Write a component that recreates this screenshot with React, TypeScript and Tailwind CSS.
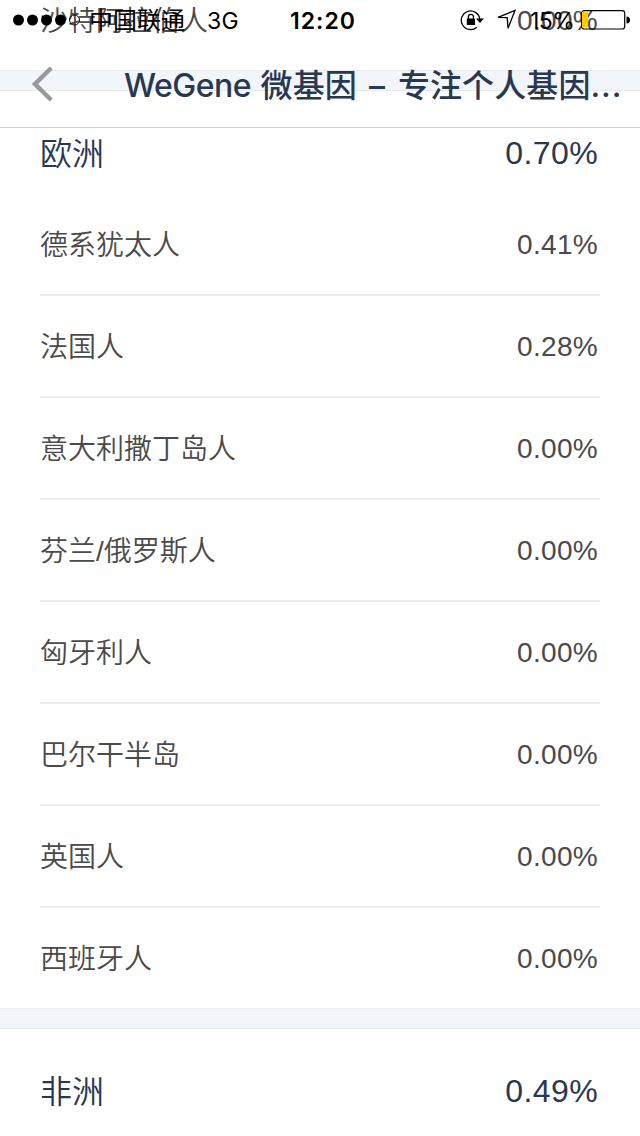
const europe = [
  { name: "德系犹太人", value: "0.41%" },
  { name: "法国人", value: "0.28%" },
  { name: "意大利撒丁岛人", value: "0.00%" },
  { name: "芬兰/俄罗斯人", value: "0.00%" },
  { name: "匈牙利人", value: "0.00%" },
  { name: "巴尔干半岛", value: "0.00%" },
  { name: "英国人", value: "0.00%" },
  { name: "西班牙人", value: "0.00%" },
];

function Row({ name, value }: { name: string; value: string }) {
  return (
    <li className="flex h-[102px] items-center justify-between border-b-2 border-[#eaeef2] pr-0.5 text-[28px] text-[#4a4a4a] last:h-[100px] last:border-b-0">
      <span className="pt-1 font-[350]">{name}</span>
      <span className="pt-0.5 tracking-[0.3px]">{value}</span>
    </li>
  );
}

function Heading({ name, value }: { name: string; value: string }) {
  return (
    <h2 className="flex h-[103px] items-center justify-between pt-5 pr-[42px] pl-10 text-[32px] text-[#283850]">
      <span className="pt-0.5 font-[350]">{name}</span>
      <span className="tracking-[0.4px]">{value}</span>
    </h2>
  );
}

function Divider() {
  return <div className="h-[21px] border-y border-[#e6ebee] bg-[#f2f6fa]" />;
}

function StatusBar() {
  return (
    <div className="flex h-10 items-center text-[23px] leading-10 text-black">
      <div className="flex w-[290px] items-center pl-[13px]">
        <svg width="68" height="12" viewBox="0 0 68 12">
          <circle cx="5.5" cy="6" r="5.5" />
          <circle cx="19.5" cy="6" r="5.5" />
          <circle cx="33.5" cy="6" r="5.5" />
          <circle cx="47.5" cy="6" r="5.5" />
          <circle cx="61.5" cy="6" r="5" fill="none" stroke="black" />
        </svg>
        <span className="ml-2 w-[118px] pt-0.5 text-[24px]">中国联通</span>
        <span className="pt-0.5 tracking-[0.3px]">3G</span>
      </div>
      <span className="w-[170px] pt-0.5 font-semibold tracking-[1px]">12:20</span>
      <svg className="shrink-0" width="24" height="22" viewBox="0 0 24 22">
        <path d="M16.8 18.2A9.3 9.3 0 1 1 19.8 10" fill="none" stroke="black" strokeWidth="1.3" />
        <path d="M16 9.5h8l-4 4.5z" />
        <rect x="6.8" y="9.5" width="8.2" height="6.5" rx=".5" />
        <path d="M8.4 10V7.8a2.5 2.5 0 0 1 5 0V10" fill="none" stroke="black" strokeWidth="1.3" />
      </svg>
      <svg className="ml-3 shrink-0" width="22" height="22" viewBox="0 0 22 22">
        <path d="M2 8.3L19 1.5L12 19.3L11.2 8.6Z" fill="none" stroke="black" strokeWidth="1.3" />
      </svg>
      <span className="ml-3 w-[50px] pt-0.5 tracking-[-0.5px]">15%</span>
      <svg className="shrink-0" width="50" height="20" viewBox="0 0 50 20">
        <rect x="1.7" y=".7" width="43" height="18.3" rx="2.5" fill="none" stroke="black" strokeWidth="1.2" />
        <rect x="2" y="2" width="6" height="15.5" fill="#fc0" />
        <path d="M46.5 6.5a3.3 3.3 0 0 1 0 7z" />
      </svg>
    </div>
  );
}

function NavBar() {
  return (
    <div className="flex h-[88px] items-center border-b border-[#d0d2d4]">
      <svg className="ml-[31px] shrink-0" width="22" height="36" viewBox="0 0 22 36">
        <path d="M20.2 2L4 18L20.2 34" fill="none" stroke="#999" strokeWidth="4.5" />
      </svg>
      <h1 className="ml-[71px] pt-[5px] text-[32px] font-medium whitespace-nowrap text-[#283850]">
        <span className="tracking-[-0.5px]">WeGene</span>{" "}
        <span className="ml-px tracking-[0.1px]">微基因</span>
        <span className="mr-[10px] ml-[9px] inline-block w-[22px] text-center">–</span>
        <span className="tracking-[0.1px]">专注个人基因</span>
        <span className="tracking-[0.9px]">...</span>
      </h1>
    </div>
  );
}

export default function App() {
  return (
    <div className="relative h-[1136px] w-[640px] overflow-hidden bg-white font-['Liberation_Sans','Noto_Sans_CJK_SC',sans-serif]">
      <main className="-mt-[30px]">
        <ul className="px-10">
          <Row name="沙特阿拉伯人" value="0.00%" />
        </ul>
        <Divider />
        <Heading name="欧洲" value="0.70%" />
        <ul className="px-10">
          {europe.map((row) => (
            <Row key={row.name} {...row} />
          ))}
        </ul>
        <Divider />
        <Heading name="非洲" value="0.49%" />
      </main>

      {/* See-through bars that float above the scrolled list */}
      <header className="absolute inset-x-0 top-0 font-['Inter','Noto_Sans_CJK_SC',sans-serif]">
        <StatusBar />
        <NavBar />
      </header>
    </div>
  );
}
